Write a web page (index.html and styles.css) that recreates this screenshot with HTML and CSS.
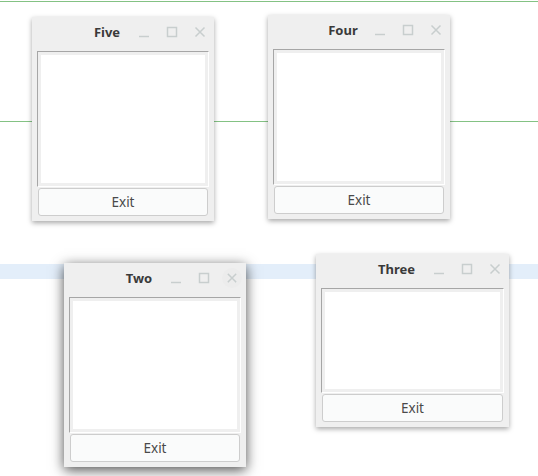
FILE: index.html
```html
<!DOCTYPE html>
<html lang="en">
<head>
    <meta charset="UTF-8">
    <title>Windows</title>
    <link rel="stylesheet" href="styles.css">
</head>
<body>

<div class="desktop">
    <div class="rule rule-top"></div>
    <div class="rule rule-mid"></div>
    <div class="band"></div>

    <div class="win win-five">
        <div class="titlebar">
            <div class="title">Five</div>
            <div class="controls">
                <svg class="ctl" viewBox="0 0 12 12"><path d="M1 10.5h10"/></svg>
                <svg class="ctl" viewBox="0 0 12 12"><rect x="1.5" y="1.5" width="9" height="9"/></svg>
                <svg class="ctl ctl-close" viewBox="0 0 12 12"><path d="M1.5 1.5l9 9M10.5 1.5l-9 9"/></svg>
            </div>
        </div>
        <div class="frame"><div class="frame-inner"></div></div>
        <div class="btn">Exit</div>
    </div>

    <div class="win win-four">
        <div class="titlebar">
            <div class="title">Four</div>
            <div class="controls">
                <svg class="ctl" viewBox="0 0 12 12"><path d="M1 10.5h10"/></svg>
                <svg class="ctl" viewBox="0 0 12 12"><rect x="1.5" y="1.5" width="9" height="9"/></svg>
                <svg class="ctl ctl-close" viewBox="0 0 12 12"><path d="M1.5 1.5l9 9M10.5 1.5l-9 9"/></svg>
            </div>
        </div>
        <div class="frame"><div class="frame-inner"></div></div>
        <div class="btn">Exit</div>
    </div>

    <div class="win win-three">
        <div class="titlebar">
            <div class="title">Three</div>
            <div class="controls">
                <svg class="ctl" viewBox="0 0 12 12"><path d="M1 10.5h10"/></svg>
                <svg class="ctl" viewBox="0 0 12 12"><rect x="1.5" y="1.5" width="9" height="9"/></svg>
                <svg class="ctl ctl-close" viewBox="0 0 12 12"><path d="M1.5 1.5l9 9M10.5 1.5l-9 9"/></svg>
            </div>
        </div>
        <div class="frame"><div class="frame-inner"></div></div>
        <div class="btn">Exit</div>
    </div>

    <div class="win win-two active">
        <div class="titlebar">
            <div class="title">Two</div>
            <div class="controls">
                <svg class="ctl" viewBox="0 0 12 12"><path d="M1 10.5h10"/></svg>
                <svg class="ctl" viewBox="0 0 12 12"><rect x="1.5" y="1.5" width="9" height="9"/></svg>
                <svg class="ctl ctl-close" viewBox="0 0 12 12"><path d="M1.5 1.5l9 9M10.5 1.5l-9 9"/></svg>
            </div>
        </div>
        <div class="frame"><div class="frame-inner"></div></div>
        <div class="btn">Exit</div>
    </div>
</div>

</body>
</html>
```

FILE: styles.css
```css
:root {
    --rule: #84c284;
    --band: #e3eefa;
    --win-bg: #efefef;
    --title: #3a3a3a;
    --text: #4a4a4a;
    --ctl: #c8cece;
}
body {
    margin: 0;
    background: #fff;
    font-family: 'Noto Sans', 'DejaVu Sans', sans-serif;
}
.desktop {
    position: relative;
    width: 538px;
    height: 476px;
    overflow: hidden;
    padding-top: 1px;
    box-sizing: border-box;
}
.rule { height: 1px; background: var(--rule); }
.rule-mid { margin-top: 119px; }
.band { height: 15px; margin-top: 142px; background: var(--band); }

/* windows */
.win {
    position: absolute;
    width: 182px;
    height: 204px;
    box-sizing: border-box;
    padding: 0 5px 5px;
    background: var(--win-bg);
    display: flex;
    flex-direction: column;
    box-shadow: 0 2px 5px rgba(0, 0, 0, 0.35);
}
.win.active { box-shadow: 0 3px 12px rgba(0, 0, 0, 0.7); }
.win-five { left: 32px; top: 17px; }
.win-four { left: 268px; top: 15px; }
.win-two { left: 64px; top: 263px; }
.win-three { left: 316px; top: 254px; width: 193px; height: 173px; }

.titlebar {
    position: relative;
    height: 30px;
    margin: 0 -5px 4px;
    display: flex;
    align-items: center;
}
.title {
    flex: 1;
    padding-right: 32px;
    text-align: center;
    font-size: 13px;
    font-weight: bold;
    color: var(--title);
}
.controls {
    position: absolute;
    right: 8px;
    top: 9px;
    display: flex;
    gap: 16px;
}
.ctl {
    width: 12px;
    height: 12px;
    fill: none;
    stroke: var(--ctl);
    stroke-width: 1.5;
}
.win.active .ctl-close {
    border-radius: 50%;
    box-shadow: 0 0 0 4px #ececec;
    background: #ececec;
}

.frame {
    flex: 1;
    padding: 3px;
    border-top: 1px solid #a6a6a6;
    border-left: 1px solid #a6a6a6;
    border-right: 1px solid #fff;
    border-bottom: 1px solid #fff;
    display: flex;
}
.frame-inner { flex: 1; background: #fff; }

.btn {
    height: 28px;
    box-sizing: border-box;
    margin: 1px 1px 0;
    border: 1px solid #cdcdcd;
    border-radius: 3px;
    background: #fafbfb;
    color: var(--text);
    font-size: 13.5px;
    line-height: 26px;
    text-align: center;
}
```
